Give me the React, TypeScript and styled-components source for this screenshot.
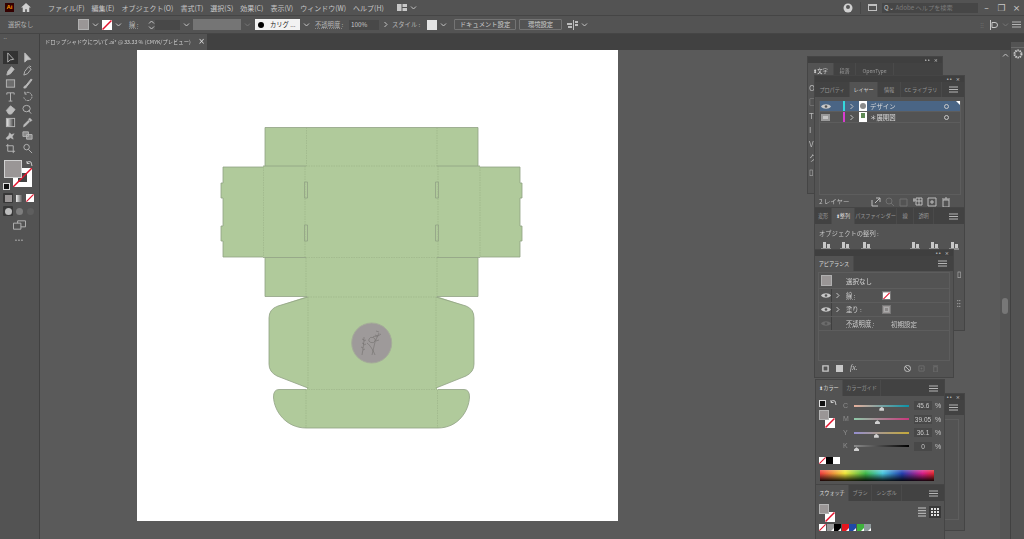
import React from 'react';
import styled, { createGlobalStyle } from 'styled-components';

const GlobalStyle = createGlobalStyle`
  html, body { margin: 0; padding: 0; background: #535353; overflow: hidden; }
  * { box-sizing: border-box; }
  body { font-family: "Noto Sans CJK JP", "Noto Sans", sans-serif; color: #c6c6c6; }
`;

const Chevron = ({ dir = 'down' }: { dir?: 'down' | 'right' | 'up' }) => {
  const paths = { down: 'M1 2.5l2.5 2.5L6 2.5', right: 'M2.5 1l2.5 2.5L2.5 6', up: 'M1 4.5L3.5 2 6 4.5' };
  return (
    <svg width="7" height="7" viewBox="0 0 7 7" fill="none" stroke="#c4c4c4" strokeWidth="1">
      <path d={paths[dir]} />
    </svg>
  );
};

const NoneSwatch = ({ size = 10 }: { size?: number }) => (
  <svg width={size} height={size} viewBox="0 0 10 10">
    <rect width="10" height="10" fill="#fff" />
    <path d="M0.5 9.5L9.5 0.5" stroke="#e3132c" strokeWidth="1.5" />
  </svg>
);

const BurgerIcon = () => (
  <svg width="9" height="7" viewBox="0 0 9 7" stroke="#b5b5b5" strokeWidth="1">
    <path d="M0 1h9M0 3.5h9M0 6h9" />
  </svg>
);

const EyeIcon = ({ dim }: { dim?: boolean }) => (
  <svg width="10" height="7" viewBox="0 0 10 7" fill={dim ? '#6c6c6c' : '#c8c8c8'}>
    <path d="M0 3.5C2 .6 8 .6 10 3.5 8 6.4 2 6.4 0 3.5z" />
    <circle cx="5" cy="3.5" r="1.3" fill="#535353" />
  </svg>
);

const toolPaths: Record<string, React.ReactNode> = {
  select: <path d="M3 1v10l2.6-2.4L9.5 8z" fill="none" />,
  direct: <path d="M3 1v10l2.6-2.4L9.5 8z" fill="#c4c4c4" />,
  pen: <path d="M2 11l1-4 4-5 3 2.5-4 5z" fill="#bcbcbc" />,
  curv: <path d="M2 11l1-4 4-5 3 2.5-4 5zM8 1l2 1" fill="none" />,
  rect: <rect x="1.5" y="2" width="9" height="8" fill="#6d6d6d" />,
  brush: <path d="M2 11c0-2 1-2.5 2-2.5L10 1l1 1-6 7.5c0 1-1 1.5-3 1.5z" fill="#bcbcbc" />,
  type: <path d="M2 2h8M6 2v9M4 11h4M2 2v2M10 2v2" fill="none" />,
  rotate: <path d="M3 3a4.5 4.5 0 1 1-1 4M3 .8V3.4h2.6" fill="none" strokeDasharray="2 .7" />,
  eraser: <path d="M1.5 7L6 2l5 4-4 5H4z" fill="#bcbcbc" />,
  shape: <path d="M1 5a4 3.5 0 0 1 8 0 4 3.5 0 0 1-8 0zM7 7l3 3.5" fill="none" />,
  gradient: (
    <>
      <defs>
        <linearGradient id="toolGrad">
          <stop offset="0" stopColor="#eee" />
          <stop offset="1" stopColor="#333" />
        </linearGradient>
      </defs>
      <rect x="1.5" y="1.5" width="9" height="9" fill="url(#toolGrad)" />
    </>
  ),
  dropper: <path d="M1.5 11l.5-2.5L7 3.5 8.5 5l-5 5zM7 2.5l1.5-1.5 2.5 2.5L9.5 5z" fill="#bcbcbc" strokeWidth=".5" />,
  puppet: <path d="M1 9l3-3 1-3 2 2 3-1-2 3 1 3-3-1.5-3 2z" fill="#bcbcbc" strokeWidth=".5" />,
  blend: <path d="M1 2h6v5H1zM5 5h6v5H5z" fill="#8a8a8a" />,
  crop: <path d="M3 1v8h8M1 3h8v8" fill="none" />,
  zoom: <path d="M2 4.5a3 3 0 1 0 6 0 3 3 0 1 0-6 0M7 7l4 4" fill="none" />,
};

const toolRows = [
  ['select', 'direct'],
  ['pen', 'curv'],
  ['rect', 'brush'],
  ['type', 'rotate'],
  ['eraser', 'shape'],
  ['gradient', 'dropper'],
  ['puppet', 'blend'],
  ['crop', 'zoom'],
];

const menus = [
  'ファイル(F)',
  '編集(E)',
  'オブジェクト(O)',
  '書式(T)',
  '選択(S)',
  '効果(C)',
  '表示(V)',
  'ウィンドウ(W)',
  'ヘルプ(H)',
];

const sliders = [
  { label: 'C', value: '45.6', pos: 46, track: 'linear-gradient(90deg,#e8b09c,#0a93a8)' },
  { label: 'M', value: '39.05', pos: 38, track: 'linear-gradient(90deg,#8ec9a8,#c8387c)' },
  { label: 'Y', value: '36.1', pos: 36, track: 'linear-gradient(90deg,#948ecf,#c4a93a)' },
  { label: 'K', value: '0', pos: 0, track: 'linear-gradient(90deg,#8a8a8a,#000)' },
];

const swatchColors = ['none', '#9a9a9a', '#000', '#e4171f', '#1f49a8', '#3fb33c', '#8f9a9c'];

const footerPaths = [
  'M1 3v6h6M5 1h4v4M9 1L4 6',
  'M1 4a3 3 0 1 0 6 0 3 3 0 1 0-6 0M6 6l3 3',
  'M1 2h7v7H1z',
  'M0 2h2v2H0zM3 1h6v7H3zM3 4h6M6 1v7',
  'M1 1h8v8H1zM5 3v4M3 5h4',
  'M2 3h6v7H2zM1 2h8M4 1h2',
];

const DieLine = () => (
  <DieSvg viewBox="137 50 481 471">
    <g fill="#b0ca9b">
      <path d="M265 127.5H478V166H265z" />
      <path d="M223 167H263V257H223V241H221V226H223V198H221V183H223z" />
      <path d="M520 167H480V257H520V241H522V226H520V198H522V183H520z" />
      <path d="M263 166H480V257.500H263z" />
      <path d="M265 257H478V296.500H265z" />
      <path d="M308 296L278 306Q269 309 269 318V364Q269 372 277 376L308 388z" />
      <path d="M436 296L466 306Q474 309 474 318V364Q474 372 466 376L436 388z" />
      <path d="M307 296H437V390H307z" />
      <path d="M306 389.500H279Q273.500 389.500 273.500 397C274 411 286 428 306 428H438C458 428 469 411 469.500 397Q469.500 389.500 464 389.500H438z" />
    </g>
    <g fill="none" stroke="#90a184" strokeWidth="0.8">
      <path d="M265 166V127.500H478V166" />
      <path d="M263 167H223V183H221V198H223V226H221V241H223V257H263" />
      <path d="M480 167H520V183H522V198H520V226H522V241H520V257H480" />
      <path d="M263 166H306M437 166H480M263 257.500H306M437 257.500H480" />
      <path d="M265 258V296.500H307M437 296.500H478V258" />
      <path d="M308 297L278 306Q269 309 269 318V364Q269 372 277 376L308 388" />
      <path d="M436 297L466 306Q474 309 474 318V364Q474 372 466 376L436 388" />
      <path d="M306 389.500H279Q273.500 389.500 273.500 397C274 411 286 428 306 428H438C458 428 469 411 469.500 397Q469.500 389.500 464 389.500H438" />
      <path d="M304.500 182h3v16h-3zM304.500 225h3v16h-3zM435.500 182h3v16h-3zM435.500 225h3v16h-3z" />
    </g>
    <g fill="none" stroke="#9bb088" strokeWidth="0.6" strokeDasharray="1.500 1">
      <path d="M306.500 127.500V166M437 127.500V166M306 166H437M263.500 167V257M480 167V257M305 166V257M438 166V257M306 257.500H437M306 258V296M437 258V296M308 297V389M436 297V389M308 297H436M306 389.500H438M306 390V428M437.500 390V428" />
    </g>
    <circle cx="371.700" cy="343" r="20" fill="#9e9a9a" stroke="#a5ac99" strokeWidth="1" />
    <g fill="none" stroke="#5e5c59" strokeWidth="0.4">
      <path d="M362 355c1-6 2-12 2-18M364 340l-2-1M364 344l-2-1M363 348l-2-1M364 341l2-1M364 345l2-1M363 350l2-1" />
      <path d="M375 355c-2-5-5-10-8-12M372 355c1-4 2-9 3-13 1-3 3-6 4-9M379 332l-3-1M378 336l-3-1M378 336l3-2M376 341l3-1" />
      <path d="M369 339a3 2.500 0 1 1 6 2 3 2.500 0 1 1-6-2zM373 337c1-1 3-1 4 0" />
    </g>
  </DieSvg>
);

export default function App() {
  return (
    <>
      <GlobalStyle />
      <Screen>
        <MenuBar>
          <AppIcon>Ai</AppIcon>
          <HomeIcon viewBox="0 0 12 11" fill="#cfcfcf">
            <path d="M6 0L0 5.500h2V11h3V7.500h2V11h3V5.500h2z" />
          </HomeIcon>
          <MenuItems>
            {menus.map(m => (
              <MenuItem key={m}>{m}</MenuItem>
            ))}
          </MenuItems>
          <LayoutIcon viewBox="0 0 10 7" fill="#c8c8c8">
            <path d="M0 0h4.500v7H0zM5.500 0H10v3H5.500zM5.500 4H10v3H5.500z" />
          </LayoutIcon>
          <Chevron />
          <Spacer />
          <UserIcon viewBox="0 0 10 10">
            <circle cx="5" cy="5" r="4.500" fill="#d0d0d0" />
            <circle cx="5" cy="4" r="2" fill="#555" />
          </UserIcon>
          <BarSeparator />
          <WindowIcon />
          <SearchBox>
            <span>Q⌄</span>
            <SearchHint>Adobe ヘルプを検索</SearchHint>
          </SearchBox>
          <WindowControls>
            <WindowButton>–</WindowButton>
            <WindowButton>❐</WindowButton>
            <WindowButton>×</WindowButton>
          </WindowControls>
        </MenuBar>

        <ControlBar>
          <ControlLabel $w={70}>選択なし</ControlLabel>
          <GreySwatch />
          <ChevronSlot><Chevron /></ChevronSlot>
          <NoneSwatch />
          <ChevronSlot><Chevron /></ChevronSlot>
          <ControlLabel $w={19} $left={4} $underline>線 :</ControlLabel>
          <SpinIcon viewBox="0 0 7 10" fill="none" stroke="#c4c4c4">
            <path d="M1 3.500L3.500 1 6 3.500M1 6.500L3.500 9 6 6.500" />
          </SpinIcon>
          <ControlInput $w={25} />
          <ChevronSlot><Chevron /></ChevronSlot>
          <DisabledField />
          <ChevronSlot $dim><Chevron /></ChevronSlot>
          <BrushField>
            <BrushDot />
            <span>カリグ ...</span>
          </BrushField>
          <ChevronSlot><Chevron /></ChevronSlot>
          <ControlLabel $w={34} $left={2} $underline>不透明度 :</ControlLabel>
          <ControlInput $w={30}>100%</ControlInput>
          <ChevronSlot><Chevron dir="right" /></ChevronSlot>
          <ControlLabel $w={35}>スタイル :</ControlLabel>
          <StyleSwatch />
          <ChevronSlot><Chevron /></ChevronSlot>
          <ControlButton $w={62} $left={4}>ドキュメント設定</ControlButton>
          <ControlButton $w={43} $left={3}>環境設定</ControlButton>
          <ArrangeIcon viewBox="0 0 11 10" fill="#bcbcbc">
            <path d="M0 3h5v2H0zM6 0h1v10H6zM8 1h3v2H8zM8 4h3v2H8zM1 6h4v2H1z" />
          </ArrangeIcon>
          <Chevron />
          <Spacer />
          <ControlDots>⁝⁝</ControlDots>
          <AlignIcon viewBox="0 0 10 10" fill="none" stroke="#c8c8c8">
            <path d="M1.500 0v10M3 2.500h3a2.500 2.500 0 0 1 0 5H3z" />
          </AlignIcon>
          <ChevronSlot $dim><Chevron /></ChevronSlot>
          <BurgerSlot><BurgerIcon /></BurgerSlot>
        </ControlBar>

        <Workspace>
          <ToolPanel>
            <ToolGrip>⠒</ToolGrip>
            <ToolGrid>
              {toolRows.flat().map(t => (
                <ToolButton key={t} $active={t === 'select'}>
                  <svg width="11" height="11" viewBox="0 0 12 12" stroke="#b8b8b8" strokeWidth="1">
                    {toolPaths[t]}
                  </svg>
                </ToolButton>
              ))}
            </ToolGrid>
            <FillStroke>
              <FillChip />
              <StrokeChip>
                <StrokeHole />
                <StrokeSlash viewBox="0 0 19 19">
                  <path d="M0 19L19 0" stroke="#e3132c" strokeWidth="1.500" />
                </StrokeSlash>
              </StrokeChip>
              <SwapMark viewBox="0 0 8 8" fill="none" stroke="#c8c8c8">
                <path d="M1 3a3 3 0 0 1 4-1l1 4M1 1v2.500h2.500" />
              </SwapMark>
              <DefaultMark />
            </FillStroke>
            <ToolModes>
              <ModeCell $on><ModeChip $bg="#9a9696" /></ModeCell>
              <ModeCell><ModeChip $bg="linear-gradient(90deg,#eee,#444)" /></ModeCell>
              <ModeCell><NoneSwatch size={8} /></ModeCell>
            </ToolModes>
            <ToolModes>
              <ModeCell $on><ModeCircle /></ModeCell>
              <ModeCell><ModeCircle $level="mid" /></ModeCell>
              <ModeCell><ModeCircle $level="dim" /></ModeCell>
            </ToolModes>
            <ScreenModeIcon viewBox="0 0 14 10" fill="none" stroke="#b8b8b8">
              <path d="M.5 3h8v6.500h-8zM5 3V.5h8.500v6.500H8.500" />
            </ScreenModeIcon>
            <MoreDots>•••</MoreDots>
          </ToolPanel>

          <DocumentArea>
            <TabBar>
              <DocTab>
                <DocTitle>ドロップシャドウについて.ai* @ 33.33 % (CMYK/プレビュー)</DocTitle>
                <DocClose>×</DocClose>
              </DocTab>
            </TabBar>
            <Canvas>
              <Artboard>
                <DieLine />
              </Artboard>
            </Canvas>
          </DocumentArea>

          <ScrollBar>
            <ScrollTop />
            <ScrollArrow><Chevron dir="up" /></ScrollArrow>
            <ScrollThumb />
          </ScrollBar>
          <Dock>
            <DockTop />
            <DockHandle />
            <svg width="10" height="10" viewBox="0 0 10 10">
              <circle cx="5" cy="5" r="3.500" fill="none" stroke="#c8c8c8" strokeWidth="2" strokeDasharray="1.500 .7" />
            </svg>
          </Dock>
        </Workspace>

        <FloatPanel $left={808} $top={57} $w={134} $h={136}>
          <PanelHandle />
          <TabStrip>
            <PanelTab $active $w={26}>⬍文字</PanelTab>
            <PanelTab $w={22}>段落</PanelTab>
            <PanelTab $w={38}>OpenType</PanelTab>
          </TabStrip>
          <ClippedGlyphs>
            <span>O</span>
            <span>□</span>
            <span>T</span>
            <span>I</span>
            <span>V</span>
            <span>ク</span>
            <span>▯</span>
          </ClippedGlyphs>
        </FloatPanel>

        <FloatPanel $left={815} $top={76} $w={149} $h={132}>
          <PanelHandle />
          <TabStrip>
            <PanelTab $w={35}>プロパティ</PanelTab>
            <PanelTab $active $w={28}>レイヤー</PanelTab>
            <PanelTab $w={23}>情報</PanelTab>
            <PanelTab $w={41}>CC ライブラリ</PanelTab>
            <StripMenu><BurgerIcon /></StripMenu>
          </TabStrip>
          <LayerList>
            <LayerRow $selected>
              <LayerEye><EyeIcon /></LayerEye>
              <LayerColor $color="#35d8dc" />
              <LayerArrow><Chevron dir="right" /></LayerArrow>
              <LayerThumb><ThumbDot /></LayerThumb>
              <LayerName>デザイン</LayerName>
              <LayerTarget />
              <CornerMark />
            </LayerRow>
            <LayerRow>
              <LayerEye><PreviewMark /></LayerEye>
              <LayerColor $color="#d83cd0" />
              <LayerArrow><Chevron dir="right" /></LayerArrow>
              <LayerThumb><ThumbGreen /></LayerThumb>
              <LayerName>＊展開図</LayerName>
              <LayerTarget />
            </LayerRow>
          </LayerList>
          <LayerFooter>
            <LayerCount>2 レイヤー</LayerCount>
            <FooterIcons>
              {footerPaths.map((d, i) => (
                <svg key={d} width="10" height="10" viewBox="0 0 10 10" fill="none" stroke={i === 1 || i === 2 ? '#707070' : '#bcbcbc'}>
                  <path d={d} />
                </svg>
              ))}
            </FooterIcons>
          </LayerFooter>
        </FloatPanel>

        <FloatPanel $left={815} $top={208} $w={149} $h={122}>
          <TabStrip $tall>
            <PanelTab $w={17}>変形</PanelTab>
            <PanelTab $active $w={23}>⬍整列</PanelTab>
            <PanelTab $w={42}>パスファインダー</PanelTab>
            <PanelTab $w={17}>線</PanelTab>
            <PanelTab $w={20}>透明</PanelTab>
            <StripMenu><BurgerIcon /></StripMenu>
          </TabStrip>
          <AlignTitle>オブジェクトの整列 :</AlignTitle>
          <AlignRow>
            {[826, 845, 866, 915, 934, 954].map(x => (
              <AlignGlyph key={x} $x={x} viewBox="0 0 10 8" fill="#c8c8c8">
                <path d="M0 6.500h10v1H0zM2 0h3v6H2zM6 2h3v4H6z" />
              </AlignGlyph>
            ))}
          </AlignRow>
          <AlignSideMarks>
            <span>▯</span>
            <span>⁝⁝</span>
          </AlignSideMarks>
        </FloatPanel>

        <FloatPanel $left={944} $top={394} $w={20} $h={136}>
          <PanelHandle />
          <TabStrip>
            <StripMenu><BurgerIcon /></StripMenu>
          </TabStrip>
          <GhostBox />
        </FloatPanel>

        <FloatPanel $left={815} $top={250} $w={138} $h={127}>
          <PanelHandle />
          <TabStrip>
            <PanelTab $active $w={39}>アピアランス</PanelTab>
            <StripMenu><BurgerIcon /></StripMenu>
          </TabStrip>
          <AppearanceBox>
            <AppearanceHead>
              <GreySwatch />
              <AppearanceTitle>選択なし</AppearanceTitle>
            </AppearanceHead>
            <AppearanceRow>
              <RowEye><EyeIcon /></RowEye>
              <RowArrow><Chevron dir="right" /></RowArrow>
              <RowLabel $underline>線 :</RowLabel>
              <SwatchFrame><NoneSwatch size={8} /></SwatchFrame>
            </AppearanceRow>
            <AppearanceRow>
              <RowEye><EyeIcon /></RowEye>
              <RowArrow><Chevron dir="right" /></RowArrow>
              <RowLabel>塗り :</RowLabel>
              <SwatchFrame><FillInner /></SwatchFrame>
            </AppearanceRow>
            <AppearanceRow>
              <RowEye><EyeIcon dim /></RowEye>
              <RowArrow />
              <RowLabel $underline>不透明度 :</RowLabel>
              <RowValue>初期設定</RowValue>
            </AppearanceRow>
          </AppearanceBox>
          <AppearanceFooter>
            <FootIcon viewBox="0 0 8 8" fill="none" stroke="#c8c8c8" strokeWidth="1.500"><path d="M1 1h6v6H1z" /></FootIcon>
            <FootIcon viewBox="0 0 8 8" fill="#c8c8c8"><path d="M0 0h8v8H0z" /></FootIcon>
            <FxLabel>fx.</FxLabel>
            <Spacer />
            <FootIcon viewBox="0 0 8 8" fill="none" stroke="#c8c8c8"><circle cx="4" cy="4" r="3.500" /><path d="M1.500 1.500l5 5" /></FootIcon>
            <FootIcon viewBox="0 0 8 8" fill="none" stroke="#6e6e6e"><path d="M1 1h6v6H1zM4 3v2M3 4h2" /></FootIcon>
            <FootIcon viewBox="0 0 8 8" fill="none" stroke="#6e6e6e"><path d="M2 2h4v6H2zM1 1h6" /></FootIcon>
          </AppearanceFooter>
        </FloatPanel>

        <FloatPanel $left={816} $top={380} $w={128} $h={105}>
          <TabStrip $tall>
            <PanelTab $active $w={27}>⬍カラー</PanelTab>
            <PanelTab $w={38}>カラーガイド</PanelTab>
            <StripMenu><BurgerIcon /></StripMenu>
          </TabStrip>
          <ColorBody>
            <ColorChips>
              <MiniMarks>
                <DefaultMarkSmall />
                <SwapMini viewBox="0 0 8 8" fill="none" stroke="#c8c8c8">
                  <path d="M1 3a3 3 0 0 1 4-1l1 4M1 1v2.500h2.500" />
                </SwapMini>
              </MiniMarks>
              <ChipStack>
                <ChipFill />
                <ChipStroke><NoneSwatch /></ChipStroke>
              </ChipStack>
            </ColorChips>
            <SliderList>
              {sliders.map(s => (
                <SliderRow key={s.label}>
                  <SliderLabel>{s.label}</SliderLabel>
                  <SliderTrack style={{ background: s.track }}>
                    <SliderThumb style={{ left: `${s.pos}%` }} />
                  </SliderTrack>
                  <SliderValue>{s.value}</SliderValue>
                  <SliderUnit>%</SliderUnit>
                </SliderRow>
              ))}
            </SliderList>
          </ColorBody>
          <QuickSwatches>
            <NoneSwatch size={7} />
            <QuickChip $bg="#000" />
            <QuickChip $bg="#fff" />
          </QuickSwatches>
          <Spectrum />
        </FloatPanel>

        <FloatPanel $left={816} $top={485} $w={128} $h={54}>
          <TabStrip $tall>
            <PanelTab $active $w={33}>スウォッチ</PanelTab>
            <PanelTab $w={23}>ブラシ</PanelTab>
            <PanelTab $w={30}>シンボル</PanelTab>
            <StripMenu><BurgerIcon /></StripMenu>
          </TabStrip>
          <SwatchHead>
            <ChipStack>
              <ChipFill />
              <ChipStroke><NoneSwatch /></ChipStroke>
            </ChipStack>
            <Spacer />
            <ViewToggle>
              <svg width="8" height="10" viewBox="0 0 8 10" stroke="#c8c8c8"><path d="M0 1h8M0 3.700h8M0 6.300h8M0 9h8" /></svg>
            </ViewToggle>
            <ViewToggle $on>
              <svg width="8" height="8" viewBox="0 0 8 8" fill="#e0e0e0"><path d="M0 0h2v2H0zM3 0h2v2H3zM6 0h2v2H6zM0 3h2v2H0zM3 3h2v2H3zM6 3h2v2H6zM0 6h2v2H0zM3 6h2v2H3zM6 6h2v2H6z" /></svg>
            </ViewToggle>
          </SwatchHead>
          <SwatchRow>
            {swatchColors.map(c =>
              c === 'none' ? <NoneSwatch key={c} size={7} /> : <SwatchCell key={c} $bg={c} />
            )}
          </SwatchRow>
        </FloatPanel>
      </Screen>
    </>
  );
}

const Screen = styled.div`
  position: relative;
  width: 1024px;
  height: 539px;
  display: flex;
  flex-direction: column;
  overflow: hidden;
  filter: blur(0.5px);
`;

const Spacer = styled.div`
  flex: 1;
`;

const MenuBar = styled.div`
  height: 16px;
  display: flex;
  align-items: center;
  padding-left: 5px;
  background: #535353;
  border-bottom: 1px solid #454545;
`;

const AppIcon = styled.div`
  width: 9px;
  height: 9px;
  background: #330000;
  color: #ff9a00;
  font: 700 6px/9px "Liberation Sans", sans-serif;
  text-align: center;
`;

const HomeIcon = styled.svg`
  width: 10px;
  height: 9px;
  margin-left: 7px;
`;

const MenuItems = styled.div`
  display: flex;
  gap: 7px;
  margin-left: 17px;
`;

const MenuItem = styled.span`
  font-size: 7px;
  line-height: 12px;
  color: #c6c6c6;
`;

const LayoutIcon = styled.svg`
  width: 10px;
  height: 7px;
  margin: 0 3px 0 13px;
`;

const UserIcon = styled.svg`
  width: 10px;
  height: 10px;
`;

const BarSeparator = styled.div`
  width: 1px;
  height: 12px;
  background: #474747;
  margin: 0 7px;
`;

const WindowIcon = styled.div`
  width: 9px;
  height: 7px;
  border: 1px solid #c0c0c0;
  border-top-width: 2px;
  margin-right: 5px;
`;

const SearchBox = styled.div`
  width: 96px;
  height: 10px;
  background: #464646;
  display: flex;
  align-items: center;
  gap: 2px;
  padding-left: 2px;
  font: 6.200px/10px "Noto Sans CJK JP", sans-serif;
  color: #c6c6c6;
`;

const SearchHint = styled.span`
  color: #7c7c7c;
`;

const WindowControls = styled.div`
  display: flex;
  margin-left: 1px;
`;

const WindowButton = styled.span`
  width: 15px;
  text-align: center;
  font: 9px/12px "DejaVu Sans", sans-serif;
  color: #c8c8c8;
`;

const ControlBar = styled.div`
  height: 18px;
  display: flex;
  align-items: center;
  padding-left: 8px;
  background: #535353;
  border-bottom: 1px solid #454545;
`;

const ControlLabel = styled.span<{ $w: number; $left?: number; $underline?: boolean }>`
  width: ${p => p.$w}px;
  margin-left: ${p => p.$left ?? 0}px;
  flex: none;
  font-size: 6.300px;
  white-space: nowrap;
  color: #b8b8b8;
  text-decoration: ${p => (p.$underline ? 'underline dotted #888' : 'none')};
`;

const GreySwatch = styled.div`
  width: 11px;
  height: 11px;
  flex: none;
  background: #9a9696;
  border: 1px solid #b0b0b0;
`;

const ChevronSlot = styled.span<{ $dim?: boolean }>`
  width: 13px;
  flex: none;
  display: flex;
  justify-content: center;
  opacity: ${p => (p.$dim ? 0.3 : 1)};
`;

const SpinIcon = styled.svg`
  width: 7px;
  height: 10px;
  flex: none;
`;

const ControlInput = styled.div<{ $w: number }>`
  width: ${p => p.$w}px;
  height: 10px;
  flex: none;
  background: #484848;
  font-size: 6.300px;
  line-height: 10px;
  padding-left: 2px;
  color: #c8c8c8;
`;

const DisabledField = styled.div`
  width: 48px;
  height: 11px;
  flex: none;
  background: #757575;
`;

const BrushField = styled.div`
  width: 45px;
  height: 11px;
  flex: none;
  margin-left: 1px;
  background: #f2f2f2;
  color: #222;
  display: flex;
  align-items: center;
  gap: 6px;
  padding-left: 3px;
  font-size: 6.300px;
`;

const BrushDot = styled.span`
  width: 6px;
  height: 6px;
  border-radius: 50%;
  background: #000;
`;

const StyleSwatch = styled.div`
  width: 10px;
  height: 10px;
  flex: none;
  background: #e4e4e4;
`;

const ControlButton = styled.div<{ $w: number; $left: number }>`
  width: ${p => p.$w}px;
  height: 11px;
  flex: none;
  margin-left: ${p => p.$left}px;
  border: 1px solid #747474;
  border-radius: 1px;
  font-size: 6.300px;
  line-height: 9px;
  text-align: center;
  color: #d0d0d0;
  white-space: nowrap;
`;

const ArrangeIcon = styled.svg`
  width: 11px;
  height: 10px;
  flex: none;
  margin: 0 3px 0 5px;
`;

const ControlDots = styled.span`
  font-size: 7px;
  color: #6e6e6e;
  margin-right: 5px;
`;

const AlignIcon = styled.svg`
  width: 10px;
  height: 10px;
`;

const BurgerSlot = styled.span`
  display: flex;
  margin: 0 3px 0 0;
`;

const Workspace = styled.div`
  flex: 1;
  display: flex;
  min-height: 0;
`;

const ToolPanel = styled.div`
  width: 40px;
  flex: none;
  background: #535353;
  border-right: 1px solid #414141;
  display: flex;
  flex-direction: column;
  align-items: center;
  padding-right: 1px;
`;

const ToolGrip = styled.div`
  height: 17px;
  align-self: flex-start;
  padding-left: 3px;
  font: 6px/9px "DejaVu Sans", sans-serif;
  color: #999;
`;

const ToolGrid = styled.div`
  display: grid;
  grid-template-columns: 15px 15px;
  grid-auto-rows: 13px;
  column-gap: 2px;
  justify-items: center;
  align-items: center;
`;

const ToolButton = styled.div<{ $active?: boolean }>`
  width: 15px;
  height: 13px;
  display: flex;
  align-items: center;
  justify-content: center;
  background: ${p => (p.$active ? '#333' : 'transparent')};
`;

const FillStroke = styled.div`
  position: relative;
  width: 34px;
  height: 33px;
  margin-top: 5px;
`;

const FillChip = styled.div`
  position: absolute;
  left: 2px;
  top: 0;
  width: 18px;
  height: 18px;
  background: #9a9696;
  border: 1px solid #d0d0d0;
  z-index: 2;
`;

const StrokeChip = styled.div`
  position: absolute;
  left: 11px;
  top: 8px;
  width: 19px;
  height: 19px;
  background: #fff;
  z-index: 1;
`;

const StrokeHole = styled.div`
  position: absolute;
  left: 5px;
  top: 5px;
  width: 9px;
  height: 9px;
  background: #444;
`;

const StrokeSlash = styled.svg`
  position: absolute;
  inset: 0;
`;

const SwapMark = styled.svg`
  position: absolute;
  right: 2px;
  top: 0;
  width: 8px;
  height: 8px;
`;

const DefaultMark = styled.div`
  position: absolute;
  left: 1px;
  bottom: 3px;
  width: 7px;
  height: 7px;
  background: #111;
  border: 1px solid #ddd;
`;

const ToolModes = styled.div`
  display: flex;
  gap: 1px;
  margin-bottom: 3px;
  align-items: center;
`;

const ModeCell = styled.div<{ $on?: boolean }>`
  width: 10px;
  height: 10px;
  display: flex;
  align-items: center;
  justify-content: center;
  border-radius: 1px;
  background: ${p => (p.$on ? '#383838' : 'transparent')};
`;

const ModeChip = styled.div<{ $bg: string }>`
  width: 7px;
  height: 7px;
  background: ${p => p.$bg};
`;

const ModeCircle = styled.div<{ $level?: 'mid' | 'dim' }>`
  width: 7px;
  height: 7px;
  border-radius: 50%;
  background: ${p => (p.$level === 'mid' ? '#7e7e7e' : p.$level === 'dim' ? '#5e5e5e' : '#bdbdbd')};
`;

const ScreenModeIcon = styled.svg`
  width: 13px;
  height: 10px;
  margin-top: 1px;
`;

const MoreDots = styled.div`
  margin-top: 7px;
  font: 5px/6px "DejaVu Sans", sans-serif;
  color: #c0c0c0;
`;

const DocumentArea = styled.div`
  flex: 1;
  min-width: 0;
  display: flex;
  flex-direction: column;
`;

const TabBar = styled.div`
  height: 16px;
  flex: none;
  background: #414141;
  display: flex;
`;

const DocTab = styled.div`
  width: 167px;
  background: #535353;
  display: flex;
  align-items: center;
  padding: 0 2px 0 5px;
`;

const DocTitle = styled.span`
  flex: 1;
  font-size: 5.300px;
  white-space: nowrap;
  color: #cfcfcf;
`;

const DocClose = styled.span`
  font: 8px/10px "DejaVu Sans", sans-serif;
  color: #dedede;
`;

const Canvas = styled.div`
  flex: 1;
  background: #5a5a5a;
  padding-left: 97px;
`;

const Artboard = styled.div`
  width: 481px;
  height: 471px;
  background: #fff;
`;

const DieSvg = styled.svg`
  display: block;
  width: 481px;
  height: 471px;
`;

const ScrollBar = styled.div`
  width: 10px;
  flex: none;
  background: #555;
  display: flex;
  flex-direction: column;
  align-items: center;
`;

const ScrollTop = styled.div`
  width: 100%;
  height: 16px;
  flex: none;
  background: #414141;
`;

const ScrollArrow = styled.div`
  display: flex;
  margin-top: 2px;
`;

const ScrollThumb = styled.div`
  width: 6px;
  height: 16px;
  margin-top: 239px;
  border-radius: 3px;
  background: #777;
`;

const Dock = styled.div`
  width: 14px;
  flex: none;
  background: #535353;
  border-left: 1px solid #414141;
  display: flex;
  flex-direction: column;
  align-items: center;
`;

const DockTop = styled.div`
  width: 100%;
  height: 8px;
  background: #414141;
`;

const DockHandle = styled.div`
  width: 100%;
  height: 6px;
  border-bottom: 1px solid #6a6a6a;
  margin-bottom: 1px;
`;

const FloatPanel = styled.div<{ $left: number; $top: number; $w: number; $h: number }>`
  position: absolute;
  left: ${p => p.$left}px;
  top: ${p => p.$top}px;
  width: ${p => p.$w}px;
  height: ${p => p.$h}px;
  background: #535353;
  box-shadow: 0 0 0 1px #454545;
  display: flex;
  flex-direction: column;
  overflow: hidden;
  font-size: 6.400px;
`;

const PanelHandle = styled.div`
  height: 6px;
  flex: none;
  background: #3f3f3f;
  display: flex;
  justify-content: flex-end;
  padding-right: 4px;
  color: #cfcfcf;
  font: 6px/6px "DejaVu Sans", sans-serif;
  &::after {
    content: '•• ×';
    font-size: 5px;
    word-spacing: 2px;
  }
`;

const TabStrip = styled.div<{ $tall?: boolean }>`
  height: ${p => (p.$tall ? 16 : 15)}px;
  flex: none;
  display: flex;
  background: #424242;
`;

const PanelTab = styled.div<{ $active?: boolean; $w: number }>`
  width: ${p => p.$w}px;
  flex: none;
  background: ${p => (p.$active ? '#535353' : 'transparent')};
  color: ${p => (p.$active ? '#dedede' : '#999')};
  font-size: 5.200px;
  letter-spacing: -0.1px;
  line-height: 15px;
  text-align: center;
  white-space: nowrap;
  border-right: 1px solid #4a4a4a;
`;

const StripMenu = styled.div`
  margin-left: auto;
  width: 15px;
  flex: none;
  display: flex;
  align-items: center;
`;

const ClippedGlyphs = styled.div`
  display: flex;
  flex-direction: column;
  gap: 4px;
  padding: 5px 0 0 1px;
  line-height: 10px;
  font-size: 8px;
  color: #b8b8b8;
`;

const LayerList = styled.div`
  margin: 4px 3px 0 4px;
  flex: 1;
  border: 1px solid #5d5d5d;
  border-top: 0;
`;

const LayerRow = styled.div<{ $selected?: boolean }>`
  position: relative;
  height: 11px;
  display: flex;
  align-items: center;
  background: ${p => (p.$selected ? '#4a6585' : 'transparent')};
  border-bottom: 1px solid #5d5d5d;
`;

const LayerEye = styled.div`
  width: 23px;
  flex: none;
  padding-left: 1px;
  display: flex;
`;

const PreviewMark = styled.div`
  width: 9px;
  height: 7px;
  background: #c4c4c4;
  border: 2px solid #9a9a9a;
`;

const LayerColor = styled.div<{ $color: string }>`
  width: 2px;
  height: 10px;
  flex: none;
  background: ${p => p.$color};
`;

const LayerArrow = styled.div`
  width: 14px;
  flex: none;
  padding-left: 3px;
  display: flex;
`;

const LayerThumb = styled.div`
  width: 8px;
  height: 10px;
  flex: none;
  background: #fff;
  display: flex;
  align-items: center;
  justify-content: center;
`;

const ThumbDot = styled.div`
  width: 6px;
  height: 6px;
  border-radius: 50%;
  background: #8a8a8a;
`;

const ThumbGreen = styled.div`
  width: 4px;
  height: 5px;
  margin-bottom: 3px;
  background: #5f8a55;
`;

const LayerName = styled.span`
  margin-left: 3px;
  flex: 1;
  font-size: 6.400px;
  color: #dcdcdc;
`;

const LayerTarget = styled.div`
  width: 5px;
  height: 5px;
  margin-right: 11px;
  border: 1px solid #c8c8c8;
  border-radius: 50%;
`;

const CornerMark = styled.div`
  position: absolute;
  right: 0;
  top: 0;
  border-top: 4px solid #fff;
  border-left: 4px solid transparent;
`;

const LayerFooter = styled.div`
  height: 13px;
  flex: none;
  display: flex;
  align-items: center;
  padding-left: 4px;
`;

const LayerCount = styled.span`
  width: 52px;
  flex: none;
  font-size: 6.400px;
  color: #c0c0c0;
`;

const FooterIcons = styled.div`
  display: flex;
  gap: 4px;
`;

const AlignTitle = styled.div`
  padding: 4px 0 0 4px;
  font-size: 6.300px;
  line-height: 12px;
  color: #c6c6c6;
`;

const AlignRow = styled.div`
  position: relative;
  height: 11px;
  margin-top: 1px;
`;

const AlignGlyph = styled.svg<{ $x: number }>`
  position: absolute;
  left: ${p => p.$x - 820}px;
  top: 1px;
  width: 10px;
  height: 8px;
`;

const AlignSideMarks = styled.div`
  display: flex;
  flex-direction: column;
  align-items: flex-end;
  gap: 22px;
  margin-top: 18px;
  padding-right: 3px;
  font-size: 8px;
  line-height: 8px;
  color: #c0c0c0;
`;

const GhostBox = styled.div`
  flex: 1;
  margin: 4px 5px 10px 0;
  border: 1px solid #5e5e5e;
  border-left: 0;
`;

const AppearanceBox = styled.div`
  margin: 1px 3px 0 3px;
  height: 89px;
  border: 1px solid #5d5d5d;
`;

const AppearanceHead = styled.div`
  height: 16px;
  display: flex;
  align-items: center;
  padding-left: 2px;
  border-bottom: 1px solid #5d5d5d;
`;

const AppearanceTitle = styled.span`
  margin-left: 14px;
  font-size: 6.500px;
  color: #d6d6d6;
`;

const AppearanceRow = styled.div`
  height: 14px;
  display: flex;
  align-items: center;
  border-bottom: 1px solid #5d5d5d;
`;

const RowEye = styled.div`
  width: 13px;
  height: 100%;
  flex: none;
  padding-left: 2px;
  display: flex;
  align-items: center;
  border-right: 1px solid #3f3f3f;
`;

const RowArrow = styled.div`
  width: 14px;
  flex: none;
  padding-left: 2px;
  display: flex;
`;

const RowLabel = styled.span<{ $underline?: boolean }>`
  width: 36px;
  flex: none;
  font-size: 6.300px;
  white-space: nowrap;
  color: #d0d0d0;
  text-decoration: ${p => (p.$underline ? 'underline dotted #888' : 'none')};
`;

const RowValue = styled.span`
  margin-left: 9px;
  font-size: 6.500px;
  color: #c8c8c8;
`;

const SwatchFrame = styled.div`
  width: 9px;
  height: 9px;
  display: flex;
  align-items: center;
  justify-content: center;
  background: #9a9696;
  border: 1px solid #777;
  overflow: hidden;
`;

const FillInner = styled.div`
  width: 5px;
  height: 5px;
  background: #8a8787;
  border: 1px solid #aaa;
`;

const AppearanceFooter = styled.div`
  height: 14px;
  display: flex;
  align-items: center;
  gap: 7px;
  padding: 0 14px 0 7px;
`;

const FootIcon = styled.svg`
  width: 7px;
  height: 7px;
  flex: none;
`;

const FxLabel = styled.span`
  font: italic 8px/10px "Liberation Serif", serif;
  color: #c8c8c8;
`;

const ColorBody = styled.div`
  display: flex;
  padding: 3px 0 0 3px;
`;

const ColorChips = styled.div`
  width: 24px;
  flex: none;
  display: flex;
  flex-direction: column;
  gap: 3px;
`;

const MiniMarks = styled.div`
  display: flex;
  align-items: center;
  gap: 4px;
`;

const DefaultMarkSmall = styled.div`
  width: 7px;
  height: 7px;
  background: #111;
  border: 1px solid #ddd;
`;

const SwapMini = styled.svg`
  width: 8px;
  height: 8px;
`;

const ChipStack = styled.div`
  position: relative;
  width: 17px;
  height: 19px;
  flex: none;
`;

const ChipFill = styled.div`
  position: absolute;
  left: 0;
  top: 0;
  width: 10px;
  height: 10px;
  background: #9a9696;
  border: 1px solid #b4b4b4;
  z-index: 1;
`;

const ChipStroke = styled.div`
  position: absolute;
  left: 6px;
  top: 8px;
  display: flex;
`;

const SliderList = styled.div`
  flex: 1;
  display: flex;
  flex-direction: column;
`;

const SliderRow = styled.div`
  height: 13.500px;
  display: flex;
  align-items: center;
`;

const SliderLabel = styled.span`
  width: 11px;
  flex: none;
  font: 7px/10px "Liberation Sans", sans-serif;
  color: #8e8e8e;
`;

const SliderTrack = styled.div`
  position: relative;
  width: 55px;
  height: 2px;
  flex: none;
`;

const SliderThumb = styled.div`
  position: absolute;
  top: 2px;
  width: 5px;
  height: 4px;
  background: #d0d0d0;
  clip-path: polygon(50% 0, 100% 50%, 100% 100%, 0 100%, 0 50%);
`;

const SliderValue = styled.span`
  width: 18px;
  height: 9px;
  margin-left: 5px;
  flex: none;
  background: #484848;
  font: 6.500px/9px "Liberation Sans", sans-serif;
  text-align: center;
  color: #c8c8c8;
`;

const SliderUnit = styled.span`
  margin-left: 3px;
  font: 7px/9px "Liberation Sans", sans-serif;
`;

const QuickSwatches = styled.div`
  display: flex;
  padding-left: 3px;
  margin-top: 4px;
`;

const QuickChip = styled.div<{ $bg: string }>`
  width: 7px;
  height: 7px;
  background: ${p => p.$bg};
`;

const Spectrum = styled.div`
  height: 11px;
  margin: 6px 10px 0 4px;
  background:
    linear-gradient(180deg, rgba(255, 255, 255, 0.25) 0%, transparent 30%, rgba(0, 0, 0, 0.9) 100%),
    linear-gradient(90deg, #ef3d3d 0%, #f0e63c 22%, #3fb84a 40%, #4cc8e0 55%, #2440b0 72%, #d81f8a 90%, #e2262c 100%);
`;

const SwatchHead = styled.div`
  display: flex;
  align-items: flex-start;
  padding: 3px 3px 0 3px;
  height: 23px;
  gap: 1px;
`;

const ViewToggle = styled.div<{ $on?: boolean }>`
  width: 12px;
  height: 12px;
  margin-top: 2px;
  display: flex;
  align-items: center;
  justify-content: center;
  background: ${p => (p.$on ? '#393939' : 'transparent')};
`;

const SwatchRow = styled.div`
  display: flex;
  gap: 0.500px;
  padding-left: 3px;
`;

const SwatchCell = styled.div<{ $bg: string }>`
  position: relative;
  width: 7px;
  height: 7px;
  background: ${p => p.$bg};
  &::after {
    content: '';
    position: absolute;
    right: 0;
    bottom: 0;
    border-bottom: 3px solid #fff;
    border-left: 3px solid transparent;
  }
`;
